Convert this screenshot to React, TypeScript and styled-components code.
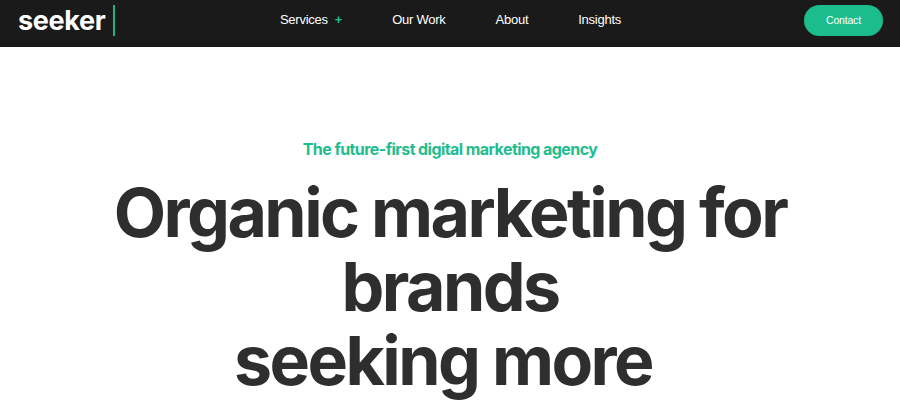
import React from 'react';
import styled, { createGlobalStyle } from 'styled-components';

const GlobalStyle = createGlobalStyle`
  html, body {
    margin: 0;
    padding: 0;
    height: 400px;
    overflow: hidden;
    background: #fff;
    font-family: "Liberation Sans", Arial, sans-serif;
  }
`;

const Header = styled.header`
  box-sizing: border-box;
  height: 47px;
  background: #1a1a1a;
  display: grid;
  grid-template-columns: 1fr auto 1fr;
  align-items: center;
  padding: 0 17px 7px 18px;
`;

const Logo = styled.div`
  display: flex;
  align-items: center;
  gap: 8px;
  color: #fff;
  font-family: Inter, "Liberation Sans", sans-serif;
  font-size: 27px;
  font-weight: 650;
  letter-spacing: -0.35px;
`;

const LogoBar = styled.span`
  width: 2px;
  height: 31px;
  background: #1fb488;
`;

const Nav = styled.nav`
  display: flex;
  align-items: center;
  gap: 50px;
  margin-bottom: 2px;
`;

const NavItem = styled.a`
  color: #fff;
  font-size: 13px;
  letter-spacing: -0.25px;
  display: flex;
  align-items: center;
  gap: 7px;
`;

const Plus = styled.span`
  color: #1fc08f;
  font-weight: 700;
`;

const Contact = styled.button`
  justify-self: end;
  width: 79px;
  height: 31px;
  border: 0;
  border-radius: 16px;
  background: #1cbd8d;
  color: #fff;
  font-family: inherit;
  font-size: 10.5px;
  letter-spacing: -0.2px;
`;

const Hero = styled.main`
  display: flex;
  flex-direction: column;
  align-items: center;
  padding-top: 92px;
  text-align: center;
  font-family: Inter, "Liberation Sans", sans-serif;
`;

const Tagline = styled.p`
  margin: 0 0 16px;
  color: #1fbd8d;
  font-size: 16px;
  font-weight: 650;
  letter-spacing: -0.58px;
  line-height: 20px;
`;

const Title = styled.h1`
  margin: 0;
  width: 720px;
  color: #2e2e2e;
  font-size: 68px;
  font-weight: 650;
  letter-spacing: -2.55px;
  line-height: 74px;
`;

// the last line sits a little left of centre in the reference
const LastLine = styled.span`
  display: block;
  padding-right: 14px;
`;

export default function App() {
  return (
    <>
      <GlobalStyle />
      <Header>
        <Logo>seeker<LogoBar /></Logo>
        <Nav>
          <NavItem>Services <Plus>+</Plus></NavItem>
          <NavItem>Our Work</NavItem>
          <NavItem>About</NavItem>
          <NavItem>Insights</NavItem>
        </Nav>
        <Contact>Contact</Contact>
      </Header>
      <Hero>
        <Tagline>The future-first digital marketing agency</Tagline>
        <Title>Organic marketing for brands<LastLine>seeking more</LastLine></Title>
      </Hero>
    </>
  );
}
